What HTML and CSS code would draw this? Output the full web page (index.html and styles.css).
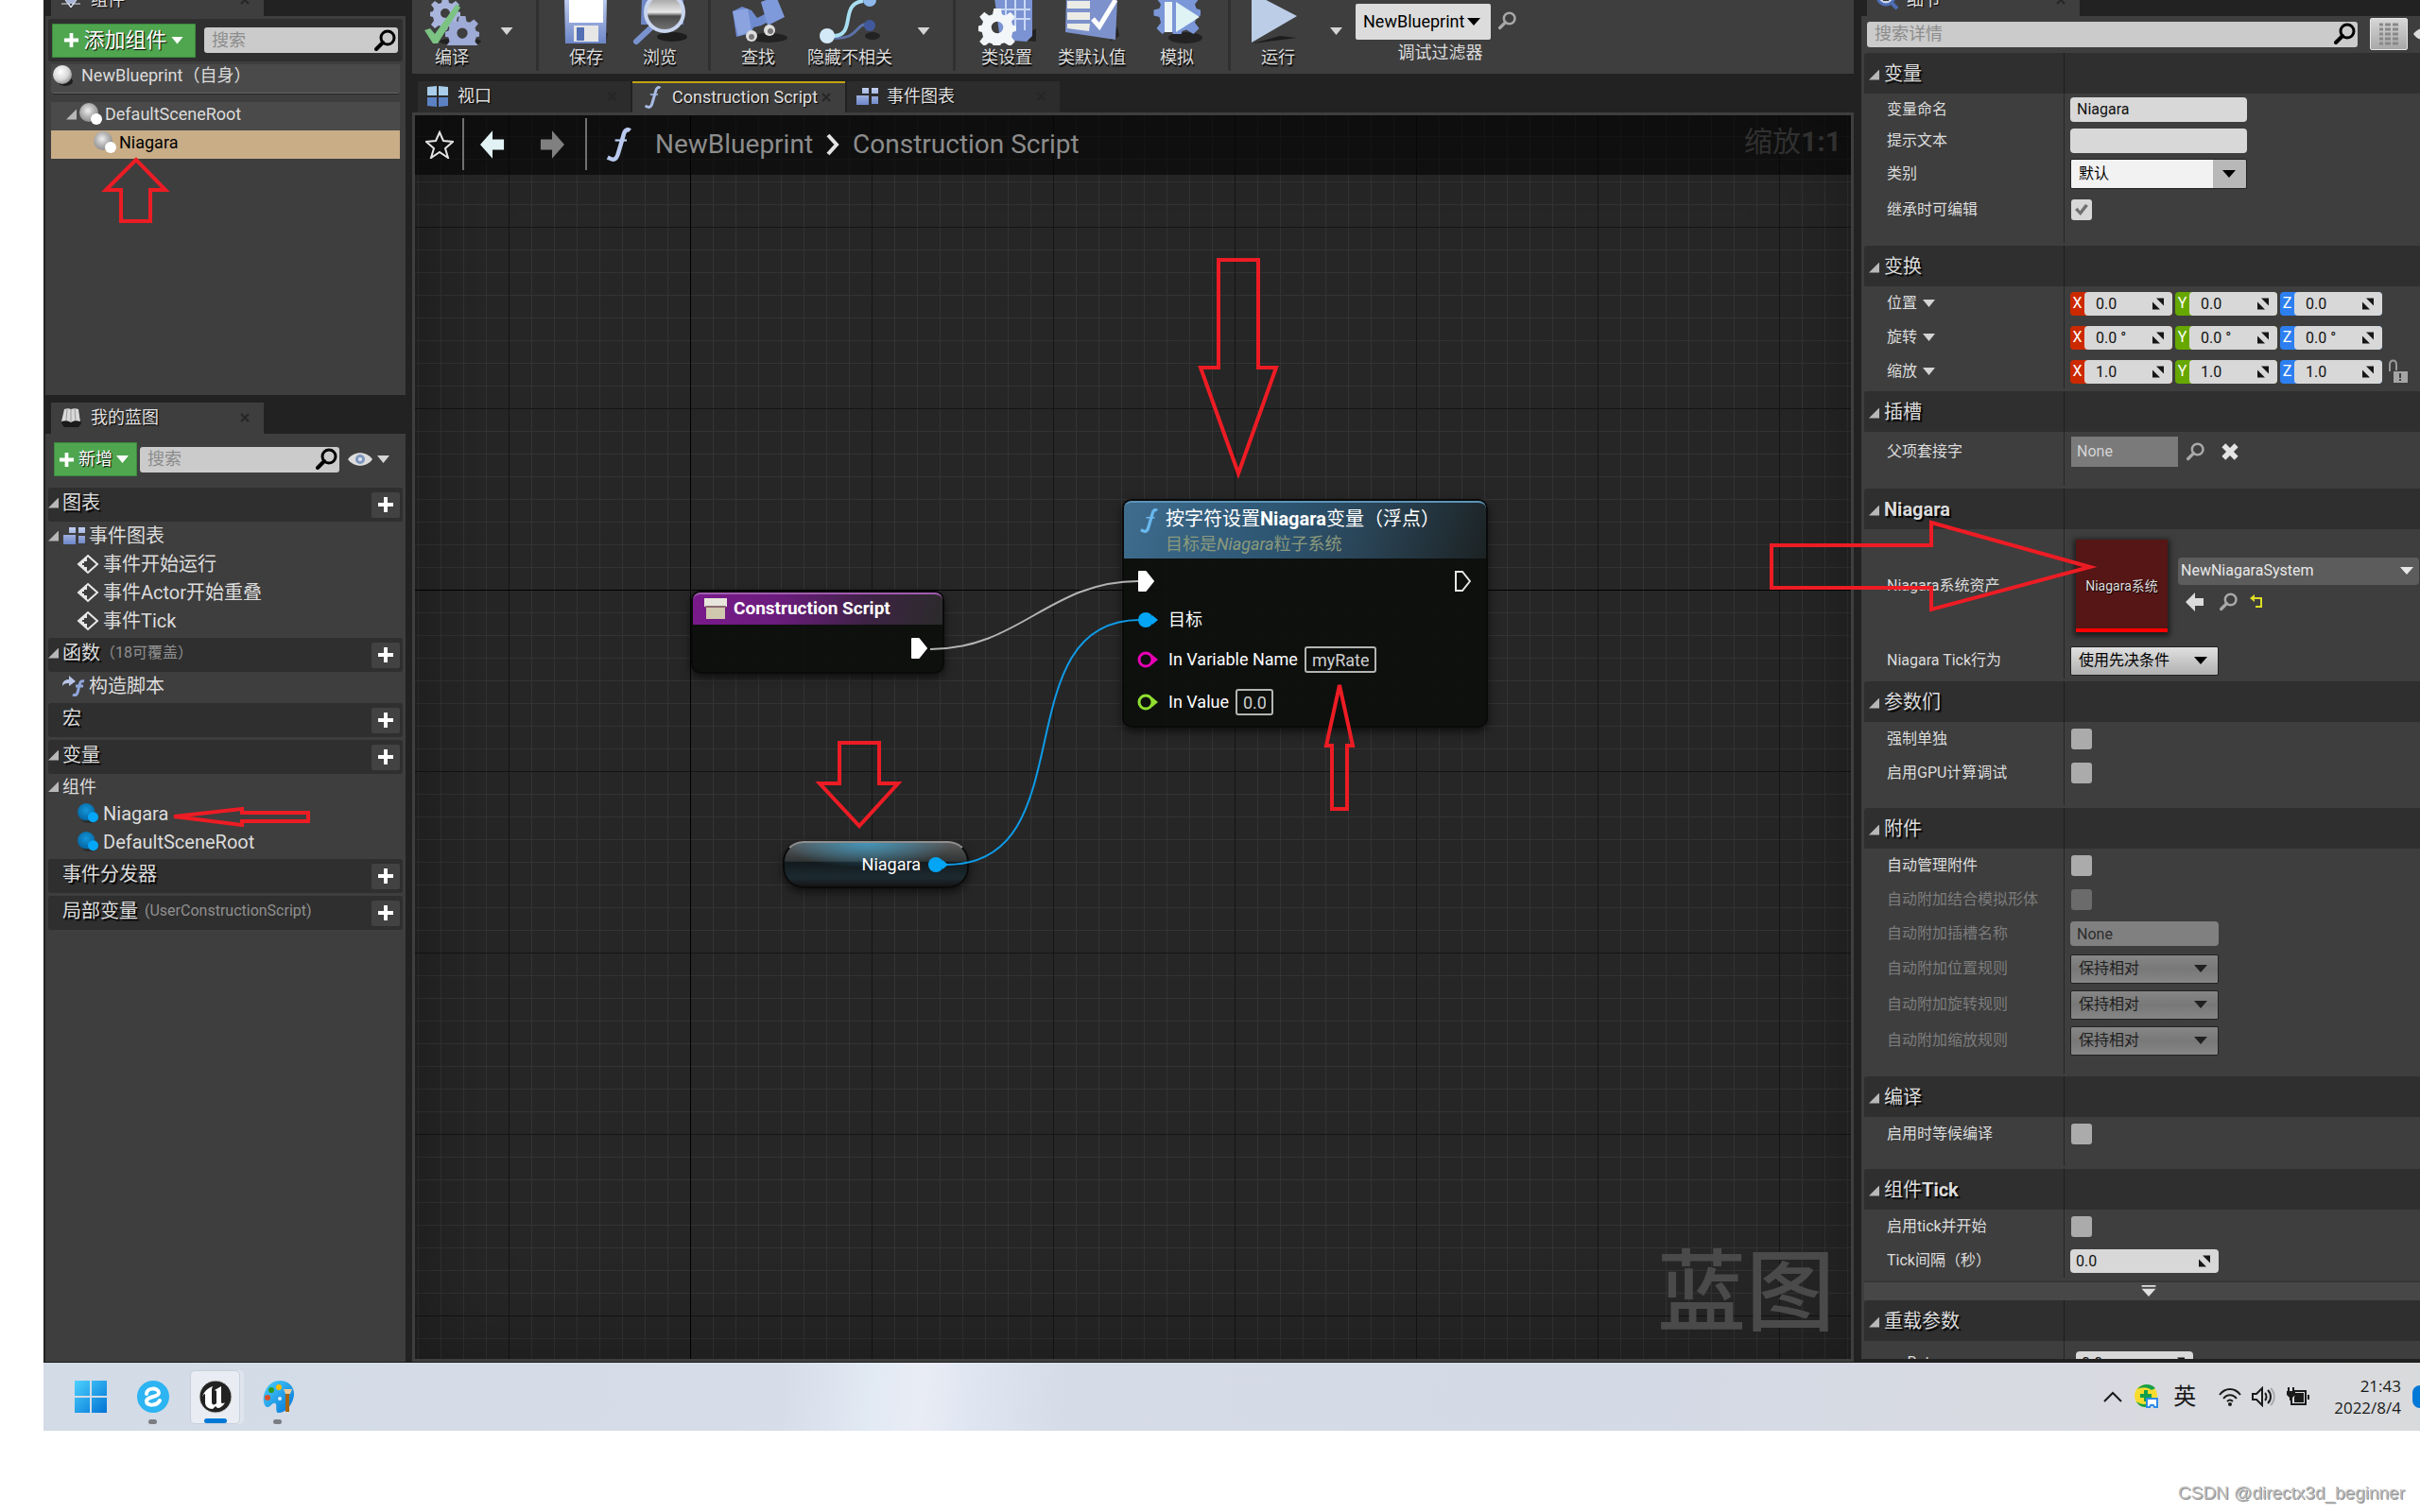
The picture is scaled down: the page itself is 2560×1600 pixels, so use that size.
FILE: index.html
```html
<!DOCTYPE html>
<html lang="zh-CN">
<head>
<meta charset="UTF-8" />
<meta name="viewport" content="width=device-width, initial-scale=1" />
<title>NewBlueprint</title>
<link rel="stylesheet" href="styles.css">
</head>
<body>

<!-- shared icons -->
<svg class="defs" width="0" height="0" aria-hidden="true">
  <defs>
    <linearGradient id="g-blue" x1="0" y1="0" x2="0" y2="1">
      <stop offset="0" stop-color="#c3d0f0"/><stop offset="1" stop-color="#6d86c8"/>
    </linearGradient>
    <radialGradient id="g-ball" cx=".4" cy=".35" r=".7">
      <stop offset="0" stop-color="#ffffff"/><stop offset=".6" stop-color="#d8d8d8"/><stop offset="1" stop-color="#8a8a8a"/>
    </radialGradient>
    <radialGradient id="g-gray" cx=".45" cy=".4" r=".65">
      <stop offset="0" stop-color="#f0f0f0"/><stop offset=".5" stop-color="#b5b5b5"/><stop offset="1" stop-color="#888888"/>
    </radialGradient>
    <radialGradient id="g-cyan" cx=".5" cy=".4" r=".6">
      <stop offset="0" stop-color="#1496dc"/><stop offset="1" stop-color="#04649e"/>
    </radialGradient>
    <linearGradient id="g-lens" x1="0" y1="0" x2="0" y2="1">
      <stop offset="0" stop-color="#8a8a8a"/><stop offset=".5" stop-color="#e8e8e8"/><stop offset=".6" stop-color="#4a4a4a"/><stop offset="1" stop-color="#777777"/>
    </linearGradient>
    <linearGradient id="g-win" x1="0" y1="0" x2="1" y2="1">
      <stop offset="0" stop-color="#4cd2ff"/><stop offset="1" stop-color="#0072d4"/>
    </linearGradient>
    <symbol id="i-search" viewBox="0 0 24 24">
      <circle cx="14" cy="9" r="7" fill="none" stroke="currentColor" stroke-width="3"/>
      <path d="M9 14L2 21" stroke="currentColor" stroke-width="4" stroke-linecap="round"/>
    </symbol>
    <symbol id="i-plus" viewBox="0 0 18 18">
      <path d="M7 1h4v6h6v4h-6v6H7v-6H1V7h6z" fill="currentColor"/>
    </symbol>
    <symbol id="i-ball" viewBox="0 0 24 24">
      <ellipse cx="14" cy="18" rx="8" ry="5" fill="#1d1d1d"/>
      <circle cx="11" cy="11" r="10" fill="url(#g-ball)"/>
    </symbol>
    <symbol id="i-comp" viewBox="0 0 26 24">
      <circle cx="11" cy="10" r="10" fill="url(#g-gray)"/>
      <circle cx="19" cy="17" r="6" fill="#ffffff"/>
    </symbol>
    <symbol id="i-var" viewBox="0 0 26 24">
      <ellipse cx="15" cy="19" rx="9" ry="4" fill="#2b2b2b"/>
      <circle cx="11" cy="10" r="10" fill="url(#g-cyan)"/>
      <circle cx="19" cy="16" r="6" fill="#04a6f7"/>
    </symbol>
    <symbol id="i-graph" viewBox="0 0 24 20">
      <path d="M7 1h7v6H7zM17 1h7v6h-7zM17 10h7v8h-7zM1 9h13v10H1z" fill="url(#g-blue)"/>
    </symbol>
    <symbol id="i-event" viewBox="0 0 24 22">
      <path d="M12 2l10 9-10 9-10-9z" fill="none" stroke="#e8e8e8" stroke-width="2"/>
      <path d="M3 11l8-8v5h-3v2h-2v2h2v2h3v5z" fill="#e8e8e8"/>
    </symbol>
    <symbol id="i-func" viewBox="0 0 24 32">
      <path d="M23 3c-2-2-5-1-6 4L12 24c-1 4-3 6-5 6-1 0-3-1-5-2" fill="none" stroke="currentColor" stroke-width="4"/>
      <path d="M9 12h11" stroke="currentColor" stroke-width="2"/>
    </symbol>
    <symbol id="i-drag" viewBox="0 0 14 14">
      <path d="M5 1h8v8zM1 5v8h8z" fill="#161616"/><path d="M3 2l9 9" stroke="#d8d8d8" stroke-width="2"/>
    </symbol>
    <symbol id="i-gear" viewBox="0 0 32 32">
      <path fill-rule="evenodd" d="M13 0h6l1 5 3 1 4-3 4 4-3 4 1 3 3 1v4l-3 1-1 4 3 4-4 4-5-3-3 1-1 4h-5l-1-4-3-1-4 3-4-4 3-4-1-4-4-1v-4l4-1 1-3-3-4 4-4 4 3 3-1zM16 11a5 5 0 1 0 0 10 5 5 0 0 0 0-10z" fill="currentColor"/>
    </symbol>
    <symbol id="i-x" viewBox="0 0 12 12">
      <path d="M2 2l8 8M10 2l-8 8" stroke="#262626" stroke-width="2"/>
    </symbol>
    <symbol id="i-pin" viewBox="0 0 22 18">
      <circle cx="9" cy="9" r="8" fill="currentColor"/><path d="M16 4l6 5-6 5z" fill="currentColor"/>
    </symbol>
    <symbol id="i-ring" viewBox="0 0 22 18">
      <circle cx="9" cy="9" r="7" fill="none" stroke="currentColor" stroke-width="3"/><path d="M16 4l6 5-6 5z" fill="currentColor"/>
    </symbol>
    <symbol id="i-exec" viewBox="0 0 18 22">
      <path d="M2 1h7l8 10-8 10H2z" fill="#ffffff" stroke="#ffffff" stroke-width="2" stroke-linejoin="round"/>
    </symbol>
    <symbol id="i-arrow" viewBox="0 0 28 32">
      <path d="M14 0v10h13v12H14v10L0 16z" fill="currentColor"/>
    </symbol>
  </defs>
</svg>

<div class="editor">

  <aside class="left">
    <div class="tab-strip cut">
      <div class="tab"><svg class="tab-icon" viewBox="0 0 24 24"><path d="M2 16h8l2 4 2-4h8M6 12l6-4 6 4-6 8z" fill="#aab6d8" stroke="#dfe4f2"/></svg><span class="tab-name">组件</span><svg class="close"><use href="#i-x"/></svg></div>
    </div>
    <section class="panel components">
      <div class="panel-bar">
        <button class="green big"><svg><use href="#i-plus"/></svg>添加组件<i class="caret"></i></button>
        <label class="search"><input type="text" placeholder="搜索" aria-label="搜索组件"><svg><use href="#i-search"/></svg></label>
      </div>
      <div class="tree">
        <div class="tree-row self"><svg><use href="#i-ball"/></svg>NewBlueprint（自身）</div>
        <div class="tree-line"></div>
        <div class="tree-row root"><i class="fold"></i><svg><use href="#i-comp"/></svg>DefaultSceneRoot</div>
        <div class="tree-row child"><svg><use href="#i-comp"/></svg>Niagara</div>
      </div>
    </section>

    <div class="tab-strip second">
      <div class="tab"><svg class="tab-icon" viewBox="0 0 24 24"><path d="M2 18L5 4c3-1 5-1 7 0 2-1 5-1 8 0l3 14-3 4H5z" fill="#1a1a1a"/><path d="M2 16L5 3c3-1 5-1 7 0 3-1 5-1 8 0l2 13c-4-1-7-1-10 1-3-2-6-2-10-1z" fill="#d9d9d9"/><path d="M12 3v13M8 3L7 15M16 3l1 12" stroke="#9a9a9a"/></svg><span class="tab-name">我的蓝图</span><svg class="close"><use href="#i-x"/></svg></div>
    </div>
    <section class="panel blueprint">
      <div class="bp-bar">
        <button class="green"><svg><use href="#i-plus"/></svg>新增<i class="caret"></i></button>
        <label class="search"><input type="text" placeholder="搜索" aria-label="搜索蓝图"><svg><use href="#i-search"/></svg></label>
        <button class="eye" aria-label="视图选项"><svg viewBox="0 0 26 14"><path d="M0 7c6-9 20-9 26 0-6 9-20 9-26 0z" fill="#dcdcdc"/><circle cx="13" cy="7" r="5" fill="#7f97bd"/><circle cx="13" cy="7" r="2" fill="#dfe7f3"/></svg><i class="caret"></i></button>
      </div>

      <h3 class="cat"><i class="fold"></i>图表<button class="add" aria-label="添加图表"><svg><use href="#i-plus"/></svg></button></h3>
      <div class="item graph-item"><i class="fold"></i><svg><use href="#i-graph"/></svg>事件图表</div>
      <div class="item deep"><svg><use href="#i-event"/></svg>事件开始运行</div>
      <div class="item deep"><svg><use href="#i-event"/></svg>事件Actor开始重叠</div>
      <div class="item deep"><svg><use href="#i-event"/></svg>事件Tick</div>

      <h3 class="cat"><i class="fold"></i>函数<small>（18可覆盖）</small><button class="add" aria-label="添加函数"><svg><use href="#i-plus"/></svg></button></h3>
      <div class="item func-item"><svg viewBox="0 0 24 22"><path d="M0 9c1-4 4-5 7-5V0l7 6-7 5V8C4 8 2 8 0 11z" fill="#b8c4e6"/><path d="M23 6c-3-1-4 0-5 4l-2 8c-1 3-3 3-5 2M14 11h8" fill="none" stroke="#8fa6dc" stroke-width="3"/></svg>构造脚本</div>

      <h3 class="cat">宏<button class="add" aria-label="添加宏"><svg><use href="#i-plus"/></svg></button></h3>
      <h3 class="cat"><i class="fold"></i>变量<button class="add" aria-label="添加变量"><svg><use href="#i-plus"/></svg></button></h3>
      <div class="item group-item"><i class="fold"></i>组件</div>
      <div class="item deep"><svg><use href="#i-var"/></svg>Niagara</div>
      <div class="item deep"><svg><use href="#i-var"/></svg>DefaultSceneRoot</div>

      <h3 class="cat">事件分发器<button class="add" aria-label="添加事件分发器"><svg><use href="#i-plus"/></svg></button></h3>
      <h3 class="cat">局部变量<small class="latin">(UserConstructionScript)</small><button class="add" aria-label="添加局部变量"><svg><use href="#i-plus"/></svg></button></h3>
    </section>
  </aside>

  <main class="center">
    <div class="toolbar">
      <div class="tools compile">
        <button class="tool"><svg viewBox="0 0 66 48"><ellipse cx="42" cy="44" rx="22" ry="4" fill="#222"/><svg x="10" y="-10" width="32" height="32" color="#a9b5dc"><use href="#i-gear"/></svg><svg x="26" y="11" width="36" height="36" color="#9eabd6"><use href="#i-gear"/></svg><path d="M4 32l6-2 5 6L38 4l4 4-24 38h-5z" fill="#7cc283"/></svg>编译</button>
        <button class="more" aria-label="编译选项"><i class="caret"></i></button>
      </div>
      <div class="tools save">
        <button class="tool"><svg viewBox="0 0 66 48"><path d="M18 44h36l2-8-4-4z" fill="#222"/><path d="M10-4h45l-1 50H11z" fill="url(#g-blue)"/><path d="M15-4h36v28H15z" fill="#fff"/><path d="M20 27h26v17H20z" fill="#e6e6e6"/><path d="M23 29h8v14h-8z" fill="#5470b4"/></svg>保存</button>
        <button class="tool"><svg viewBox="0 0 66 48"><ellipse cx="46" cy="39" rx="16" ry="5" fill="#1d1d1d"/><path d="M14-2h44v28H13z" fill="#6f88c6"/><path d="M24 29L8 44" stroke="#7a93cf" stroke-width="6" stroke-linecap="round"/><circle cx="38" cy="13" r="20" fill="url(#g-lens)" stroke="#c9d5ee" stroke-width="4"/></svg>浏览</button>
      </div>
      <div class="tools find">
        <button class="tool"><svg viewBox="0 0 82 48"><ellipse cx="52" cy="40" rx="20" ry="5" fill="#222"/><path d="M14 12l10-5 10 4 6 8 8-4 4 8-8 4-8 2-2 6-16 4z" fill="#6f8bd0"/><path d="M14 12l16-3 4 24-14 5z" fill="#8ba4e0"/><path d="M44 2l16-6 9 22-18 9z" fill="#7f9adb"/><circle cx="34" cy="38" r="6" fill="#ddd"/><circle cx="53" cy="32" r="6" fill="#ddd"/><circle cx="34" cy="39" r="3" fill="#777"/><circle cx="54" cy="33" r="3" fill="#777"/></svg>查找</button>
        <button class="tool wide"><svg viewBox="0 0 112 48"><path d="M38 40C68 42 60 24 76 26" fill="none" stroke="#5c72a8" stroke-width="3"/><ellipse cx="80" cy="38" rx="8" ry="4" fill="#222"/><path d="M38 38c26 0 6-34 32-37" fill="none" stroke="#a8dff0" stroke-width="4"/><circle cx="32" cy="38" r="8" fill="#d3e9f8"/><circle cx="77" cy="0" r="7" fill="#8eb8ea"/><circle cx="77" cy="27" r="6" fill="#41599c"/></svg>隐藏不相关</button>
        <button class="more" aria-label="隐藏选项"><i class="caret"></i></button>
      </div>
      <div class="tools klass">
        <button class="tool"><svg viewBox="0 0 90 48"><path d="M56 42l20 2V30z" fill="#222"/><path d="M32-2h40v40l-6 6-28-2z" fill="#7b93d2"/><path d="M44 0v32M54 0v32M64 0v32M36 10h34M36 20h34" stroke="#c9d8f5" stroke-width="2"/><svg x="15" y="5" width="40" height="40" color="#f2f6f8"><use href="#i-gear"/></svg></svg>类设置</button>
        <button class="tool"><svg viewBox="0 0 90 48"><path d="M64 44l10-6-2-10z" fill="#222"/><path d="M18-2h54l-2 44-53-8z" fill="#7d92cc"/><path d="M19 1h24v8H19zM19 13h24v8H19zM19 25h24l-1 8-23-3z" fill="#ecece6"/><path d="M46 20l7 8L70 0" fill="none" stroke="#fff" stroke-width="5"/></svg>类默认值</button>
        <button class="tool"><svg viewBox="0 0 90 48"><ellipse cx="54" cy="40" rx="18" ry="6" fill="#222"/><svg x="17" y="-12" width="58" height="58" color="#7b97d8"><use href="#i-gear"/></svg><circle cx="46" cy="17" r="14" fill="#7b97d8"/><path d="M32 2h8v32h-8z" fill="#eaf4f6"/><path d="M44 2l25 16-25 16z" fill="#dff2f4"/></svg>模拟</button>
      </div>
      <div class="tools play">
        <button class="tool"><svg viewBox="0 0 82 48"><path d="M14 46l47-6-18-2z" fill="#1d1d1d"/><path d="M13-8l48 25-48 28z" fill="#bccde8"/></svg>运行</button>
        <button class="more" aria-label="运行选项"><i class="caret"></i></button>
      </div>
      <div class="filter">
        <div class="filter-row">
          <span class="combo"><select id="debug-filter"><option>NewBlueprint</option></select></span>
          <button class="icon-btn" aria-label="查找对象"><svg><use href="#i-search"/></svg></button>
        </div>
        <label for="debug-filter">调试过滤器</label>
      </div>
    </div>

    <div class="doc-tabs">
      <div class="doc-tab"><svg viewBox="0 0 24 24"><path d="M1 2l10-1v10H1zM13 1l10 1v9H13z" fill="#a9cdea"/><path d="M1 13h10v10l-10-1zM13 13h10v9l-10 1z" fill="#5c82c4"/></svg><span class="tab-name">视口</span><svg class="close"><use href="#i-x"/></svg></div>
      <div class="doc-tab active"><svg class="f"><use href="#i-func"/></svg><span class="tab-name">Construction Script</span><svg class="close"><use href="#i-x"/></svg></div>
      <div class="doc-tab"><svg><use href="#i-graph"/></svg><span class="tab-name">事件图表</span><svg class="close"><use href="#i-x"/></svg></div>
    </div>

    <div class="graph">
      <div class="title-bar">
        <button class="icon-btn star" aria-label="收藏"><svg viewBox="0 0 30 30"><path d="M15 2l4 9 10 1-8 7 3 10-9-6-9 6 3-10-8-7 10-1z" fill="none" stroke="#e4e4e4" stroke-width="2"/></svg></button>
        <div class="bar-line"></div>
        <button class="icon-btn back" aria-label="后退"><svg><use href="#i-arrow"/></svg></button>
        <button class="icon-btn forward" aria-label="前进"><svg><use href="#i-arrow"/></svg></button>
        <div class="bar-line"></div>
        <svg class="f-big"><use href="#i-func"/></svg>
        <a class="crumb" href="#">NewBlueprint</a>
        <svg class="chevron" viewBox="0 0 16 24"><path d="M3 2l9 10-9 10" fill="none" stroke="#e4e4e4" stroke-width="4"/></svg>
        <a class="crumb" href="#">Construction Script</a>
        <span class="zoom-level">缩放<b>1:1</b></span>
      </div>

      <div class="node entry">
        <div class="node-head purple"><svg viewBox="0 0 24 22"><path d="M0 0h24v9H0z" fill="#e8e6dc"/><path d="M2 9h20v13H2z" fill="#cfc7ae"/><path d="M1 8h22v2H1z" fill="#8d6a72"/></svg>Construction Script</div>
        <div class="pin-row out"><svg class="exec"><use href="#i-exec"/></svg></div>
      </div>

      <div class="node call">
        <div class="node-head blue">
          <svg class="f"><use href="#i-func"/></svg>
          <div>
            <div class="node-title">按字符设置<b>Niagara</b>变量（浮点）</div>
            <div class="node-sub">目标是<i>Niagara</i>粒子系统</div>
          </div>
        </div>
        <div class="pin-row exec-row"><svg class="exec"><use href="#i-exec"/></svg><svg class="exec" viewBox="0 0 18 22"><path d="M2 1h7l8 10-8 10H2z" fill="none" stroke="#e8e8e8" stroke-width="2"/></svg></div>
        <div class="pin-row"><svg class="pin target"><use href="#i-pin"/></svg>目标</div>
        <div class="pin-row"><svg class="pin name"><use href="#i-ring"/></svg><label for="var-name">In Variable Name</label><input id="var-name" class="pin-input" type="text" value="myRate"></div>
        <div class="pin-row"><svg class="pin value"><use href="#i-ring"/></svg><label for="in-value">In Value</label><input id="in-value" class="pin-input short" type="text" value="0.0"></div>
      </div>

      <div class="node getter">Niagara<svg class="pin target"><use href="#i-pin"/></svg></div>

      <svg class="wires" viewBox="0 0 1519 1316">
        <path d="M545 565C639 565 671 493 765 493" stroke="#b4b4b4"/>
        <path d="M563 793C711 793 621 534 767 534" stroke="#0e9be8"/>
      </svg>

      <div class="watermark">蓝图</div>
    </div>
  </main>

  <aside class="right">
    <div class="tab-strip cut">
      <div class="tab"><svg class="tab-icon" viewBox="0 0 24 24"><circle cx="11" cy="8" r="9" fill="#c9d3ea" stroke="#4d6db5" stroke-width="3"/><path d="M17 15l6 6" stroke="#4d6db5" stroke-width="4"/><path d="M11 4v8M8 12h6" stroke="#333" stroke-width="2"/></svg><span class="tab-name">细节</span><svg class="close"><use href="#i-x"/></svg></div>
    </div>
    <section class="panel details">
      <div class="detail-bar">
        <label class="search"><input type="text" placeholder="搜索详情" aria-label="搜索详情"><svg><use href="#i-search"/></svg></label>
        <button class="matrix" aria-label="属性矩阵"><svg viewBox="0 0 20 24"><path d="M0 2h4M6 2h6M14 2h6M0 7h4M6 7h6M14 7h6M0 12h4M6 12h6M14 12h6M0 17h4M6 17h6M14 17h6M0 22h4M6 22h6M14 22h6" stroke="#888" stroke-width="3"/></svg></button>
        <svg class="eye-cut" viewBox="0 0 26 14"><path d="M0 7c6-9 20-9 26 0-6 9-20 9-26 0z" fill="#dcdcdc"/></svg>
      </div>

      <div class="group">
        <h3><i class="fold"></i>变量</h3>
        <div class="row text"><label for="d-name">变量命名</label><div><input id="d-name" class="field" type="text" value="Niagara"></div></div>
        <div class="row text"><label for="d-tip">提示文本</label><div><input id="d-tip" class="field" type="text"></div></div>
        <div class="row pick"><label for="d-cat">类别</label><div><span class="combo split"><select id="d-cat"><option>默认</option></select></span></div></div>
        <div class="row pick"><label for="d-inherit">继承时可编辑</label><div><input id="d-inherit" type="checkbox" checked></div></div>
        <div class="pad"></div>
      </div>

      <div class="group">
        <h3><i class="fold"></i>变换</h3>
        <div class="row"><span>位置<i class="caret"></i></span><div class="vec">
          <label class="num x"><em>X</em><input type="text" value="0.0"><svg><use href="#i-drag"/></svg></label>
          <label class="num y"><em>Y</em><input type="text" value="0.0"><svg><use href="#i-drag"/></svg></label>
          <label class="num z"><em>Z</em><input type="text" value="0.0"><svg><use href="#i-drag"/></svg></label>
        </div></div>
        <div class="row"><span>旋转<i class="caret"></i></span><div class="vec">
          <label class="num x"><em>X</em><input type="text" value="0.0 °"><svg><use href="#i-drag"/></svg></label>
          <label class="num y"><em>Y</em><input type="text" value="0.0 °"><svg><use href="#i-drag"/></svg></label>
          <label class="num z"><em>Z</em><input type="text" value="0.0 °"><svg><use href="#i-drag"/></svg></label>
        </div></div>
        <div class="row"><span>缩放<i class="caret"></i></span><div class="vec">
          <label class="num x"><em>X</em><input type="text" value="1.0"><svg><use href="#i-drag"/></svg></label>
          <label class="num y"><em>Y</em><input type="text" value="1.0"><svg><use href="#i-drag"/></svg></label>
          <label class="num z"><em>Z</em><input type="text" value="1.0"><svg><use href="#i-drag"/></svg></label>
          <svg class="lock" viewBox="0 0 22 26"><path d="M2 13V6c0-6 7-6 7 0v6" fill="none" stroke="#9a9a9a" stroke-width="2"/><path d="M6 13h15v12H6z" fill="#a5a5a5"/><path d="M13 15v5M13 21v2" stroke="#3e3e3e" stroke-width="2"/></svg>
        </div></div>
      </div>

      <div class="group">
        <h3><i class="fold"></i>插槽</h3>
        <div class="row tall"><label for="d-socket">父项套接字</label><div><input id="d-socket" class="socket" type="text" value="None"><button class="icon-btn" aria-label="浏览"><svg><use href="#i-search"/></svg></button><button class="icon-btn clear" aria-label="清除"><svg viewBox="0 0 18 18"><path d="M3 3l12 12M15 3L3 15" stroke="#e4e4e4" stroke-width="5"/></svg></button></div></div>
        <div class="pad"></div>
      </div>

      <div class="group">
        <h3><i class="fold"></i><b>Niagara</b></h3>
        <div class="row asset"><label for="d-asset">Niagara系统资产</label><div>
          <div class="thumb">Niagara系统</div>
          <div class="asset-side">
            <span class="combo dark"><select id="d-asset"><option>NewNiagaraSystem</option></select></span>
            <div class="asset-tools">
              <button class="icon-btn" aria-label="使用所选"><svg viewBox="0 0 20 20"><path d="M10 0v6h9v8h-9v6L0 10z" fill="#dcdcdc"/></svg></button>
              <button class="icon-btn" aria-label="浏览"><svg><use href="#i-search"/></svg></button>
              <button class="icon-btn reset" aria-label="重置"><svg viewBox="0 0 20 20"><path d="M5 6h9v9H8" fill="none" stroke="#dede28" stroke-width="2"/><path d="M7 2v8L2 6z" fill="#dede28"/></svg></button>
            </div>
          </div>
        </div></div>
        <div class="row pick"><label for="d-tick">Niagara Tick行为</label><div><span class="combo light"><select id="d-tick"><option>使用先决条件</option></select></span></div></div>
      </div>

      <div class="group">
        <h3><i class="fold"></i>参数们</h3>
        <div class="row"><label for="d-solo">强制单独</label><div><input id="d-solo" type="checkbox"></div></div>
        <div class="row"><label for="d-gpu">启用GPU计算调试</label><div><input id="d-gpu" type="checkbox"></div></div>
        <div class="pad"></div>
      </div>

      <div class="group">
        <h3><i class="fold"></i>附件</h3>
        <div class="row"><label for="d-manage">自动管理附件</label><div><input id="d-manage" type="checkbox"></div></div>
        <div class="row off"><label for="d-weld">自动附加结合模拟形体</label><div><input id="d-weld" type="checkbox" disabled></div></div>
        <div class="row off"><label for="d-sock2">自动附加插槽名称</label><div><input id="d-sock2" class="field mid" type="text" value="None" disabled></div></div>
        <div class="row off rule"><label for="d-loc">自动附加位置规则</label><div><span class="combo light"><select id="d-loc" disabled><option>保持相对</option></select></span></div></div>
        <div class="row off rule"><label for="d-rot">自动附加旋转规则</label><div><span class="combo light"><select id="d-rot" disabled><option>保持相对</option></select></span></div></div>
        <div class="row off rule"><label for="d-scl">自动附加缩放规则</label><div><span class="combo light"><select id="d-scl" disabled><option>保持相对</option></select></span></div></div>
        <div class="pad"></div>
      </div>

      <div class="group">
        <h3><i class="fold"></i>编译</h3>
        <div class="row"><label for="d-wait">启用时等候编译</label><div><input id="d-wait" type="checkbox"></div></div>
        <div class="pad"></div>
      </div>

      <div class="group">
        <h3><i class="fold"></i>组件<b>Tick</b></h3>
        <div class="row"><label for="d-start">启用tick并开始</label><div><input id="d-start" type="checkbox"></div></div>
        <div class="row"><label for="d-int">Tick间隔（秒）</label><div><span class="num plain"><input id="d-int" type="text" value="0.0"><svg><use href="#i-drag"/></svg></span></div></div>
      </div>
      <button class="expand" aria-label="显示高级"><svg viewBox="0 0 16 14"><path d="M0 0h16v2H0zM0 4h16l-8 9z" fill="#e0e0e0"/></svg></button>

      <div class="group">
        <h3><i class="fold"></i>重载参数</h3>
        <div class="row override"><label for="d-rate">myRate</label><div><span class="num plain narrow"><input id="d-rate" type="text" value="0.0"><svg><use href="#i-drag"/></svg></span></div></div>
      </div>
    </section>
  </aside>
</div>

<footer class="taskbar">
  <button class="app" aria-label="开始"><svg viewBox="0 0 36 36"><path d="M1 1h16v16H1zM19 1h16v16H19zM1 19h16v16H1zM19 19h16v16H19z" fill="url(#g-win)"/></svg></button>
  <button class="app run" aria-label="浏览器"><svg viewBox="0 0 36 36"><circle cx="18" cy="18" r="17" fill="#2db4f2"/><path d="M11 15c0-7 13-7 13-1 0 5-13 3-13 9 0 5 11 5 14-1" fill="none" stroke="#fff" stroke-width="4" stroke-linecap="round"/></svg></button>
  <button class="app focus" aria-label="虚幻编辑器"><svg viewBox="0 0 36 36"><circle cx="18" cy="18" r="17" fill="#222" stroke="#d8d8d8"/><path d="M4 18c2-6 6-9 11-11l-1 3v14c0 3 3 3 5 1V12l-2-1 7-4v16c0 2 1 3 4 1-2 4-5 6-8 6l-2-2-3 3c-5 0-8-3-8-7V15c-1 0-2 1-3 3z" fill="#fff"/></svg></button>
  <button class="app run" aria-label="画图"><svg viewBox="0 0 36 36"><path d="M20 1c9 0 15 6 15 14S28 35 19 35c-5 0-1-9-4-10-3-2-5 5-9 4C-1 25 3 1 20 1z" fill="url(#g-win)"/><circle cx="7" cy="19" r="3" fill="#d8502a"/><circle cx="11" cy="11" r="3" fill="#2e9b22"/><circle cx="19" cy="8" r="3" fill="#fbbc05"/><circle cx="20" cy="20" r="2" fill="#e3ecf6"/><path d="M28 14v20" stroke="#a8640a" stroke-width="4"/><path d="M24 10h9l-2 5h-5z" fill="#ecc898"/></svg></button>

  <div class="tray">
    <svg class="t-up" viewBox="0 0 20 12"><path d="M1 11l9-9 9 9" fill="none" stroke="#1a1a1a" stroke-width="2"/></svg>
    <svg class="t-360" viewBox="0 0 26 26"><circle cx="12" cy="12" r="12" fill="#f7dc2e"/><path d="M3 5c5-7 15-6 19-1l-4 2C13 2 7 3 3 5zM2 18c3 6 9 7 13 5v-3c-5 2-9 1-13-2z" fill="#15a04a"/><path d="M10 6h4v4h4v4h-4v4h-4v-4H6v-4h4z" fill="#15a04a"/><path d="M13 15h11v9h-3l-1-2h-3l-1 2h-3z" fill="#fff" stroke="#2a8be8" stroke-width="2"/></svg>
    <span class="t-ime">英</span>
    <svg class="t-wifi" viewBox="0 0 26 20"><path d="M2 8c6-8 16-8 22 0M6 12c4-5 10-5 14 0M10 15c2-2 4-2 6 0" fill="none" stroke="#1a1a1a" stroke-width="2"/><circle cx="13" cy="18" r="2" fill="#1a1a1a"/></svg>
    <svg class="t-vol" viewBox="0 0 26 22"><path d="M2 8h4l6-6v18l-6-6H2z" fill="none" stroke="#1a1a1a" stroke-width="2"/><path d="M15 7c2 2 2 6 0 8M18 4c4 4 4 10 0 14" fill="none" stroke="#1a1a1a" stroke-width="2"/><path d="M21 2c5 5 5 13 0 18" fill="none" stroke="#aaa" stroke-width="2"/></svg>
    <svg class="t-bat" viewBox="0 0 26 20"><path d="M8 4h13v14H6v-6" fill="none" stroke="#1a1a1a" stroke-width="2"/><path d="M10 6h9v10H9v-5zM23 8h2v5h-2zM1 4h9v4l-3 3v3H4v-3L1 8zM2 0h2v4H2zM7 0h2v4H7z" fill="#1a1a1a"/></svg>
    <div class="clock">21:43<br>2022/8/4</div>
    <div class="notice"></div>
  </div>
</footer>

<div class="credit">CSDN @directx3d_beginner</div>

<!-- hand drawn arrows over the window -->
<svg class="marks" viewBox="0 0 2560 1600">
  <path d="M144 169L112 201H128V234H159V201H175Z"/>
  <path d="M184 864L256 856V860H326V869H256V873Z"/>
  <path d="M1289 275V389H1270L1310 501L1350 389H1331V275Z"/>
  <path d="M888 786H930V829H950L909 874L867 829H888Z"/>
  <path d="M1417 725L1431 789H1425V856H1409V789H1403Z"/>
  <path d="M1874 577H2043V553L2211 600L2043 645V622H1874Z"/>
</svg>

</body>
</html>
```

FILE: styles.css
```css
* {
  box-sizing: border-box;
}
body {
  margin: 0;
  height: 100vh;
  display: flex;
  flex-direction: column;
  position: relative;
  overflow: hidden;
  background: #ffffff;
  color: #dcdcdc;
  font-family: Roboto, "Noto Sans CJK SC", sans-serif;
  font-size: 18px;
  line-height: 24px;
}
button, input, select {
  font: inherit;
  color: inherit;
  margin: 0;
  padding: 0;
  border: none;
  background: none;
  border-radius: 0;
}
select {
  appearance: none;
}
i, em {
  font-style: normal;
}
h3 {
  margin: 0;
  font-weight: 400;
  font-size: 20px;
}
svg {
  flex: none;
  display: block;
}
.defs {
  position: absolute;
}

/* small shapes */
.caret {
  flex: none;
  display: inline-block;
  width: 13px;
  height: 8px;
  background: #d4d4d4;
  clip-path: polygon(0 0, 100% 0, 50% 100%);
}
.fold {
  flex: none;
  width: 11px;
  height: 11px;
  background: #b8b8b8;
  clip-path: polygon(100% 0, 100% 100%, 0 100%);
}

/* frame */
.editor {
  flex: 1;
  min-height: 0;
  margin-left: 46px;
  display: grid;
  grid-template-columns: 390px minmax(0, 1fr) 599px;
  background: #222222;
  border-bottom: 1px solid #1a1a1a;
}
.left, .center, .right {
  display: flex;
  flex-direction: column;
  min-height: 0;
  min-width: 0;
}
.left {
  padding: 0 7px 0 2px;
}
.right {
  padding-left: 8px;
}
.tab-strip {
  flex: none;
  height: 33px;
  padding-left: 6px;
  display: flex;
  align-items: flex-end;
  overflow: hidden;
}
.tab-strip.cut {
  height: 17px;
}
.tab-strip.second {
  margin-top: 8px;
}
.tab {
  width: 225px;
  height: 33px;
  padding: 0 14px 2px 9px;
  display: flex;
  align-items: center;
  background: #3e3e3e;
}
.tab-icon {
  width: 24px;
  height: 24px;
}
.tab-name {
  flex: 1;
  margin-left: 9px;
  overflow: hidden;
  white-space: nowrap;
  color: #e0e0e0;
  text-shadow: 1px 1px 1px #000000;
}
.close {
  width: 12px;
  height: 12px;
}
.panel {
  background: #3e3e3e;
}
.components {
  flex: none;
  height: 401px;
  padding: 3px 3px 0;
}
.panel-bar {
  height: 45px;
  padding: 0 5px 0 4px;
  display: flex;
  align-items: center;
  gap: 9px;
  background: #2f2f2f;
  border-radius: 3px;
}
.green {
  flex: none;
  width: 88px;
  height: 36px;
  padding: 0 8px 0 4px;
  display: flex;
  align-items: center;
  justify-content: space-between;
  background: #4fa64f;
  border: 1px solid #3d8a3f;
  color: #ffffff;
  text-shadow: 1px 1px 1px #000000;
}
.green svg {
  width: 17px;
  height: 17px;
}
.green .caret {
  background: #ffffff;
}
.green.big {
  width: 152px;
  padding: 0 12px 0 11px;
  font-size: 22px;
}
.search {
  flex: 1;
  min-width: 0;
  height: 27px;
  padding-right: 1px;
  display: flex;
  align-items: center;
  background: #cbcbcb;
  border-radius: 3px;
  color: #000000;
}
.search input {
  flex: 1;
  min-width: 0;
  padding-left: 8px;
}
.search input::placeholder {
  color: #8c8c8c;
  opacity: 1;
}
.search svg {
  width: 24px;
  height: 24px;
}

/* component tree */
.tree {
  padding: 3px 3px 0;
}
.tree-row {
  height: 30px;
  display: flex;
  align-items: center;
  background: #4a4a4a;
}
.tree-row svg {
  width: 26px;
  height: 24px;
}
.self {
  padding: 0 0 6px 0;
  gap: 6px;
}
.root {
  padding: 0 0 4px 16px;
  gap: 2px;
}
.child {
  padding: 0 0 4px 44px;
  gap: 2px;
  background: #c8ad87;
  color: #000000;
}
.tree-line {
  height: 2px;
  margin: 0 2px 8px;
  background: #666666;
  border-bottom: 1px solid #222222;
}

/* my blueprint */
.blueprint {
  flex: 1;
  min-height: 0;
  padding: 0 3px;
}
.bp-bar {
  height: 54px;
  padding: 0 14px 0 6px;
  display: flex;
  align-items: center;
  gap: 4px;
}
.bp-bar .search {
  margin-left: -1px;
}
.eye {
  margin-left: 5px;
  display: flex;
  align-items: center;
  gap: 5px;
}
.eye svg {
  width: 26px;
  height: 14px;
}
.cat {
  height: 36px;
  margin: 3px 0 0;
  padding: 0 3px 4px 15px;
  display: flex;
  align-items: center;
  background: #2f2f2f;
  border-radius: 3px;
  text-shadow: 2px 2px 1px #000000;
}
.cat .fold {
  margin: 0 4px 0 -15px;
}
.cat small {
  font-size: 16px;
  color: #909090;
  text-shadow: none;
}
.cat .latin {
  margin-left: 7px;
}
.add {
  width: 30px;
  height: 27px;
  margin: 4px 0 0 auto;
  display: flex;
  align-items: center;
  justify-content: center;
  background: #424242;
  border-radius: 2px;
  color: #ffffff;
}
.add svg {
  width: 18px;
  height: 18px;
}
.item {
  height: 30px;
  display: flex;
  align-items: center;
  gap: 4px;
  font-size: 20px;
}
.item svg {
  width: 24px;
  height: 22px;
}
.func-item {
  padding-left: 15px;
}
.deep {
  padding-left: 30px;
}
.group-item {
  height: 27px;
  font-size: 18px;
}

/* toolbar */
.toolbar {
  flex: none;
  height: 78px;
  display: flex;
  background: #3e3e3e;
}
.tools {
  height: 75px;
  padding-left: 9px;
  display: flex;
  border-right: 3px solid #303030;
}
.tools.compile {
  width: 134px;
}
.tools.save {
  width: 182px;
  padding-left: 11px;
}
.tools.find {
  width: 259px;
}
.tools.klass {
  width: 291px;
}
.tools.play {
  border-right: none;
}
.tool {
  display: flex;
  flex-direction: column;
  align-items: center;
  line-height: 26px;
  text-shadow: 1px 2px 1px #000000;
}
.tool svg {
  height: 48px;
}
.compile .tool {
  width: 66px;
}
.compile .more {
  width: 50px;
}
.save .tool {
  width: 78px;
}
.save .tool svg {
  width: 66px;
}
.find .tool, .play .tool {
  width: 82px;
}
.find .wide {
  width: 112px;
}
.klass .tool {
  width: 90px;
}
.more {
  width: 44px;
  height: 62px;
}
.play .more {
  width: 41px;
}
.filter {
  padding-top: 4px;
  text-align: center;
}
.filter-row {
  display: flex;
  align-items: center;
  gap: 8px;
}
.filter label {
  display: block;
  margin-left: 8px;
  line-height: 28px;
}
.filter .combo {
  width: 143px;
  height: 38px;
  background: #dcdcdc;
  color: #000000;
}
.filter .icon-btn {
  margin-top: -2px;
}
.combo {
  position: relative;
  display: block;
  border-radius: 2px;
}
.combo select {
  width: 100%;
  height: 100%;
  padding-left: 8px;
  opacity: 1;
}
.combo::after {
  content: "";
  position: absolute;
  right: 11px;
  top: 50%;
  width: 14px;
  height: 8px;
  margin-top: -4px;
  background: currentColor;
  clip-path: polygon(0 0, 100% 0, 50% 100%);
  pointer-events: none;
}
.icon-btn {
  width: 20px;
  height: 20px;
  color: #a8a8a8;
}
.icon-btn svg {
  width: 100%;
  height: 100%;
}

/* document tabs */
.doc-tabs {
  flex: none;
  height: 41px;
  padding: 8px 0 0 6px;
  display: flex;
  gap: 2px;
}
.doc-tab {
  width: 225px;
  padding: 0 14px 2px 9px;
  display: flex;
  align-items: center;
  background: #2c2c2c;
}
.doc-tab svg {
  width: 24px;
  height: 24px;
}
.doc-tab .close {
  width: 12px;
  height: 12px;
}
.doc-tab.active {
  background: #3e3e3e;
  border-top: 2px solid #c2a411;
}
.doc-tab .f {
  color: #a8bbe4;
}

/* graph */
.graph {
  flex: 1;
  min-height: 0;
  position: relative;
  overflow: hidden;
  border: 3px solid #3e3e3e;
  background-color: #262626;
  background-image:
    linear-gradient(#000000, #000000),
    linear-gradient(#000000, #000000),
    linear-gradient(90deg, #151515 1px, transparent 1px),
    linear-gradient(#151515 1px, transparent 1px),
    linear-gradient(90deg, #333333 1px, transparent 1px),
    linear-gradient(#333333 1px, transparent 1px);
  background-size: 1px 100%, 100% 1px, 192px 192px, 192px 192px, 24px 24px, 24px 24px;
  background-position: 291px 0, 0 502px, 99px 0, 0 118px, 3px 0, 0 22px;
  background-repeat: no-repeat, no-repeat, repeat, repeat, repeat, repeat;
}
.graph::before {
  content: "";
  position: absolute;
  inset: 0;
  box-shadow: inset 0 0 90px rgba(0, 0, 0, 0.35);
}
.title-bar {
  position: relative;
  height: 63px;
  padding: 0 10px 2px 11px;
  display: flex;
  align-items: center;
  background: rgba(0, 0, 0, 0.55);
}
.title-bar .star {
  width: 30px;
  height: 30px;
}
.bar-line {
  width: 2px;
  height: 55px;
  margin: 0 0 0 9px;
  background: #707070;
}
.title-bar .back, .title-bar .forward {
  width: 26px;
  height: 32px;
  margin-left: 17px;
  color: #e2f2f4;
}
.title-bar .forward {
  margin: 0 13px 0 37px;
  color: #808080;
}
.forward svg {
  transform: scaleX(-1);
}
.f-big {
  width: 28px;
  height: 36px;
  margin: 0 25px 0 19px;
  color: #b9c9ee;
}
.crumb {
  font-size: 28px;
  line-height: 36px;
  color: #8c8c8c;
  text-decoration: none;
}
.chevron {
  width: 16px;
  height: 24px;
  margin: 0 13px 0 13px;
}
.zoom-level {
  margin-left: auto;
  padding-bottom: 6px;
  font-size: 30px;
  line-height: 36px;
  color: #303030;
}
.watermark {
  position: absolute;
  right: 17px;
  bottom: 14px;
  font-size: 94px;
  line-height: 110px;
  font-weight: 500;
  color: #4a4a4a;
}
.wires {
  position: absolute;
  left: 0;
  top: 0;
  width: 1519px;
  height: 1316px;
  fill: none;
  stroke-width: 2;
}
.node {
  position: absolute;
  background: rgba(13, 15, 13, 0.94);
  border: 2px solid #0a0a0a;
  border-radius: 10px;
  box-shadow: 0 4px 10px rgba(0, 0, 0, 0.6);
  color: #ffffff;
}
.node-head {
  display: flex;
  border-radius: 8px 8px 0 0;
  border-top: 2px solid #8b8b8b;
}
.entry {
  left: 292px;
  top: 503px;
  width: 268px;
  height: 88px;
}
.purple {
  height: 34px;
  align-items: center;
  gap: 7px;
  padding: 0 0 2px 12px;
  background: linear-gradient(100deg, #7a1a8c 0%, #6a1c7c 35%, #3d2344 70%, #2b2b2b 100%);
  border-top-color: #a05cae;
  font-size: 19px;
  font-weight: 700;
}
.purple svg {
  width: 24px;
  height: 22px;
}
.exec {
  width: 18px;
  height: 22px;
}
.pin-row {
  height: 44px;
  padding-left: 14px;
  display: flex;
  align-items: center;
}
.pin-row.out {
  height: 50px;
  padding-right: 16px;
  justify-content: flex-end;
}
.call {
  left: 748px;
  top: 406px;
  width: 387px;
  height: 242px;
}
.blue {
  height: 61px;
  padding: 2px 0 0 15px;
  gap: 7px;
  background: linear-gradient(110deg, #3f6d8e 0%, #2c5470 45%, #2a4558 65%, #1c2223 100%);
  border-top-color: #5c93b8;
}
.blue .f {
  width: 22px;
  height: 26px;
  margin-top: 4px;
  color: #69b8ee;
}
.node-title {
  font-size: 20px;
  line-height: 30px;
  white-space: nowrap;
}
.node-sub {
  font-size: 18px;
  line-height: 24px;
  color: #8b9a7c;
}
.node-sub i {
  font-style: italic;
}
.exec-row {
  height: 48px;
  padding-right: 16px;
  justify-content: space-between;
}
.exec-row + .pin-row {
  height: 34px;
}
.pin-row label {
  margin-right: 7px;
}
.call .pin-row:nth-child(4) {
  height: 50px;
}
.call .pin-row:nth-child(5) {
  height: 40px;
}
.pin {
  width: 22px;
  height: 18px;
  margin-right: 11px;
}
.target {
  color: #03a5f4;
}
.name {
  color: #e800b4;
}
.value {
  color: #90e030;
}
.pin-input {
  width: 76px;
  height: 28px;
  padding: 0 6px;
  border: 2px solid #b4b4b4;
  border-radius: 3px;
  color: #cfcfcf;
}
.pin-input.short {
  width: 40px;
}
.getter {
  left: 389px;
  top: 768px;
  width: 197px;
  height: 50px;
  padding-right: 20px;
  display: flex;
  align-items: center;
  justify-content: flex-end;
  gap: 7px;
  border-radius: 22px;
  border-top-color: #8e8e8e;
  background:
    radial-gradient(ellipse 90px 26px at 45% 0, rgba(65, 155, 195, 0.9), transparent),
    linear-gradient(#5a5a5a 0%, #303434 42%, #121a1e 44%, #1c2a30 80%, #141414 100%);
}
.getter .pin {
  margin-right: 0;
}

/* details */
.details {
  flex: 1;
  min-height: 0;
  margin-bottom: 3px;
  padding-left: 3px;
  overflow: hidden;
}
.detail-bar {
  height: 39px;
  padding: 0 0 1px 3px;
  display: flex;
  align-items: center;
  overflow: hidden;
}
.detail-bar .search {
  flex: none;
  width: 519px;
}
.matrix {
  flex: none;
  width: 40px;
  height: 34px;
  margin-left: 13px;
  display: flex;
  align-items: center;
  justify-content: center;
  background: linear-gradient(#d6d6d6, #a8a8a8);
  border: 1px solid #e4e4e4;
  border-radius: 2px;
}
.matrix svg {
  width: 20px;
  height: 24px;
}
.eye-cut {
  width: 26px;
  height: 16px;
  margin-left: 6px;
}
.group {
  margin-bottom: 3px;
  background: linear-gradient(#262626, #262626) 211px 0 / 1px 100% no-repeat;
  font-size: 16px;
}
.group h3 {
  height: 43px;
  padding-left: 5px;
  display: flex;
  align-items: center;
  background: linear-gradient(#1e1e1e, #1e1e1e) 211px 0 / 1px 100% no-repeat #2f2f2f;
  border-radius: 3px 0 0 0;
  text-shadow: 2px 2px 1px #000000;
}
.group h3 .fold {
  margin: 3px 5px 0 0;
}
.pad {
  height: 16px;
}
.row {
  height: 36px;
  display: grid;
  grid-template-columns: 218px minmax(0, 1fr);
  align-items: center;
}
.row > :first-child {
  padding-left: 24px;
}
.row > span {
  display: flex;
  align-items: center;
  gap: 6px;
}
.row > div {
  display: flex;
  align-items: center;
}
.row.text {
  height: 33px;
}
.row.pick {
  height: 38px;
}
.row.tall {
  height: 41px;
}
.row.rule {
  height: 38px;
}
.row.asset {
  height: 120px;
}
.row.off {
  color: #7c7c7c;
}
.field {
  width: 187px;
  height: 26px;
  padding-left: 7px;
  background: #d8d8d8;
  border-radius: 4px;
  color: #111111;
}
.field.mid {
  width: 157px;
}
.field:disabled {
  background: #808080;
  color: #2c2c2c;
}
.details input[type="checkbox"] {
  appearance: none;
  position: relative;
  width: 22px;
  height: 22px;
  margin-left: 1px;
  background: #ababab;
  border-radius: 3px;
}
.details input[type="checkbox"]:checked {
  background: #d8d8d8;
}
.details input[type="checkbox"]:checked::after {
  content: "";
  position: absolute;
  left: 4px;
  top: 5px;
  width: 14px;
  height: 12px;
  background: #707070;
  clip-path: polygon(0 50%, 20% 32%, 38% 60%, 78% 0, 100% 15%, 42% 100%);
}
.details input[type="checkbox"]:disabled {
  background: #6b6b6b;
}
.combo.split {
  width: 187px;
  height: 32px;
  border: 1px solid #222222;
  background: linear-gradient(90deg, #f2f2f2 150px, #b8b8b8 150px);
  color: #000000;
}
.combo.light {
  width: 157px;
  height: 31px;
  border: 1px solid #222222;
  background: linear-gradient(#e0e0e0, #b0b0b0);
  color: #000000;
}
.off .combo.light {
  background: linear-gradient(#868686, #787878 50%, #868686);
  color: #202020;
}
.combo select:disabled {
  color: #202020;
  opacity: 1;
}
.combo.dark {
  width: 255px;
  height: 29px;
  background: #5c5c5c;
  border-radius: 4px;
  color: #e8e8e8;
  text-shadow: 1px 1px 1px #000000;
}
.combo.dark select {
  padding-left: 3px;
}
.combo.dark::after {
  right: 6px;
}
.vec {
  gap: 3px;
}
.num {
  width: 108px;
  height: 25px;
  display: flex;
  align-items: center;
  border-radius: 4px;
  color: #111111;
}
.num em {
  width: 15px;
  text-align: center;
  color: #ffffff;
}
.num.x {
  background: #cc2900;
}
.num.y {
  background: #66a800;
}
.num.z {
  background: #2d7ff0;
}
.num input {
  flex: 1;
  min-width: 0;
  width: 0;
  height: 25px;
  padding-left: 12px;
  background: #d8d8d8;
  border-radius: 4px 0 0 4px;
}
.num svg {
  width: 29px;
  height: 25px;
  padding: 5px 8px 5px 7px;
  background: #d8d8d8;
  border-radius: 0 4px 4px 0;
}
.num.plain {
  width: 157px;
}
.num.plain input {
  padding-left: 6px;
}
.num.narrow {
  width: 124px;
  margin-left: 6px;
}
.lock {
  width: 22px;
  height: 26px;
  margin-left: 3px;
}
.socket {
  width: 113px;
  height: 32px;
  margin: 0 9px 0 1px;
  padding-left: 6px;
  background: #7a7a7a;
  color: #d4d4d4;
}
.clear {
  margin-left: 16px;
}
.thumb {
  width: 97px;
  height: 98px;
  margin: 0 11px 0 6px;
  padding-top: 4px;
  display: flex;
  align-items: center;
  justify-content: center;
  background: #561616;
  border-bottom: 4px solid #ff0000;
  box-shadow: 0 2px 6px 2px rgba(0, 0, 0, 0.6);
  font-size: 14px;
  text-shadow: 1px 1px 1px #000000;
}
.asset-side {
  padding-bottom: 4px;
}
.asset-tools {
  display: flex;
  gap: 16px;
  margin: 8px 0 0 8px;
}
.reset {
  margin-left: -6px;
}
.expand {
  width: 100%;
  height: 21px;
  padding-left: 14px;
  display: flex;
  align-items: center;
  justify-content: center;
  background: #474747;
  border-top: 2px solid #363636;
}
.expand svg {
  width: 16px;
  height: 13px;
}
.row.override {
  height: 46px;
}

/* taskbar */
.taskbar {
  flex: none;
  height: 72px;
  margin-left: 46px;
  padding-left: 23px;
  display: flex;
  align-items: center;
  gap: 13px;
  background: linear-gradient(95deg, #d2dbe6 0%, #d6dce8 31%, #e2eaf4 35%, #e9ecf4 37%, #dfe6f2 39%, #d5dbe7 43%, #d3dae6 65%, #d8dae2 82%, #d9dadc 100%);
  color: #1a1a1a;
}
.app {
  position: relative;
  width: 53px;
  height: 57px;
  display: flex;
  align-items: center;
  justify-content: center;
  border-radius: 5px;
}
.app svg {
  width: 36px;
  height: 36px;
}
.app.focus {
  background: #e9edf3;
  border: 1px solid #c8d0dc;
  box-shadow: 4px 0 0 #dfe5ee;
}
.app.run::after, .app.focus::after {
  content: "";
  position: absolute;
  bottom: 0;
  width: 9px;
  height: 5px;
  border-radius: 3px;
  background: #7a7e84;
}
.app.focus::after {
  width: 24px;
  background: #0078d7;
}
.tray {
  flex: 1;
  display: flex;
  align-items: center;
  justify-content: flex-end;
}
.t-up {
  width: 20px;
  height: 12px;
}
.t-360 {
  width: 26px;
  height: 26px;
  margin-left: 13px;
}
.t-ime {
  margin-left: 15px;
  font-size: 24px;
}
.t-wifi {
  width: 26px;
  height: 20px;
  margin-left: 23px;
}
.t-vol {
  width: 26px;
  height: 22px;
  margin-left: 9px;
}
.t-bat {
  width: 26px;
  height: 20px;
  margin-left: 11px;
}
.clock {
  margin-left: 25px;
  text-align: right;
  font-family: "Open Sans", sans-serif;
  font-size: 17px;
  line-height: 23px;
}
.notice {
  width: 8px;
  height: 24px;
  margin-left: 12px;
  border-radius: 12px 0 0 12px;
  background: #0078d7;
}
.credit {
  flex: none;
  height: 86px;
  padding: 54px 16px 0 0;
  text-align: right;
  font-family: "Liberation Sans", sans-serif;
  font-size: 19px;
  color: #bdbdbd;
  text-shadow: 1px 1px 0 #8a8a8a;
}
.marks {
  position: absolute;
  left: 0;
  top: 0;
  width: 2560px;
  height: 1600px;
  pointer-events: none;
  fill: none;
  stroke: #ed1c24;
  stroke-width: 4;
}
```
